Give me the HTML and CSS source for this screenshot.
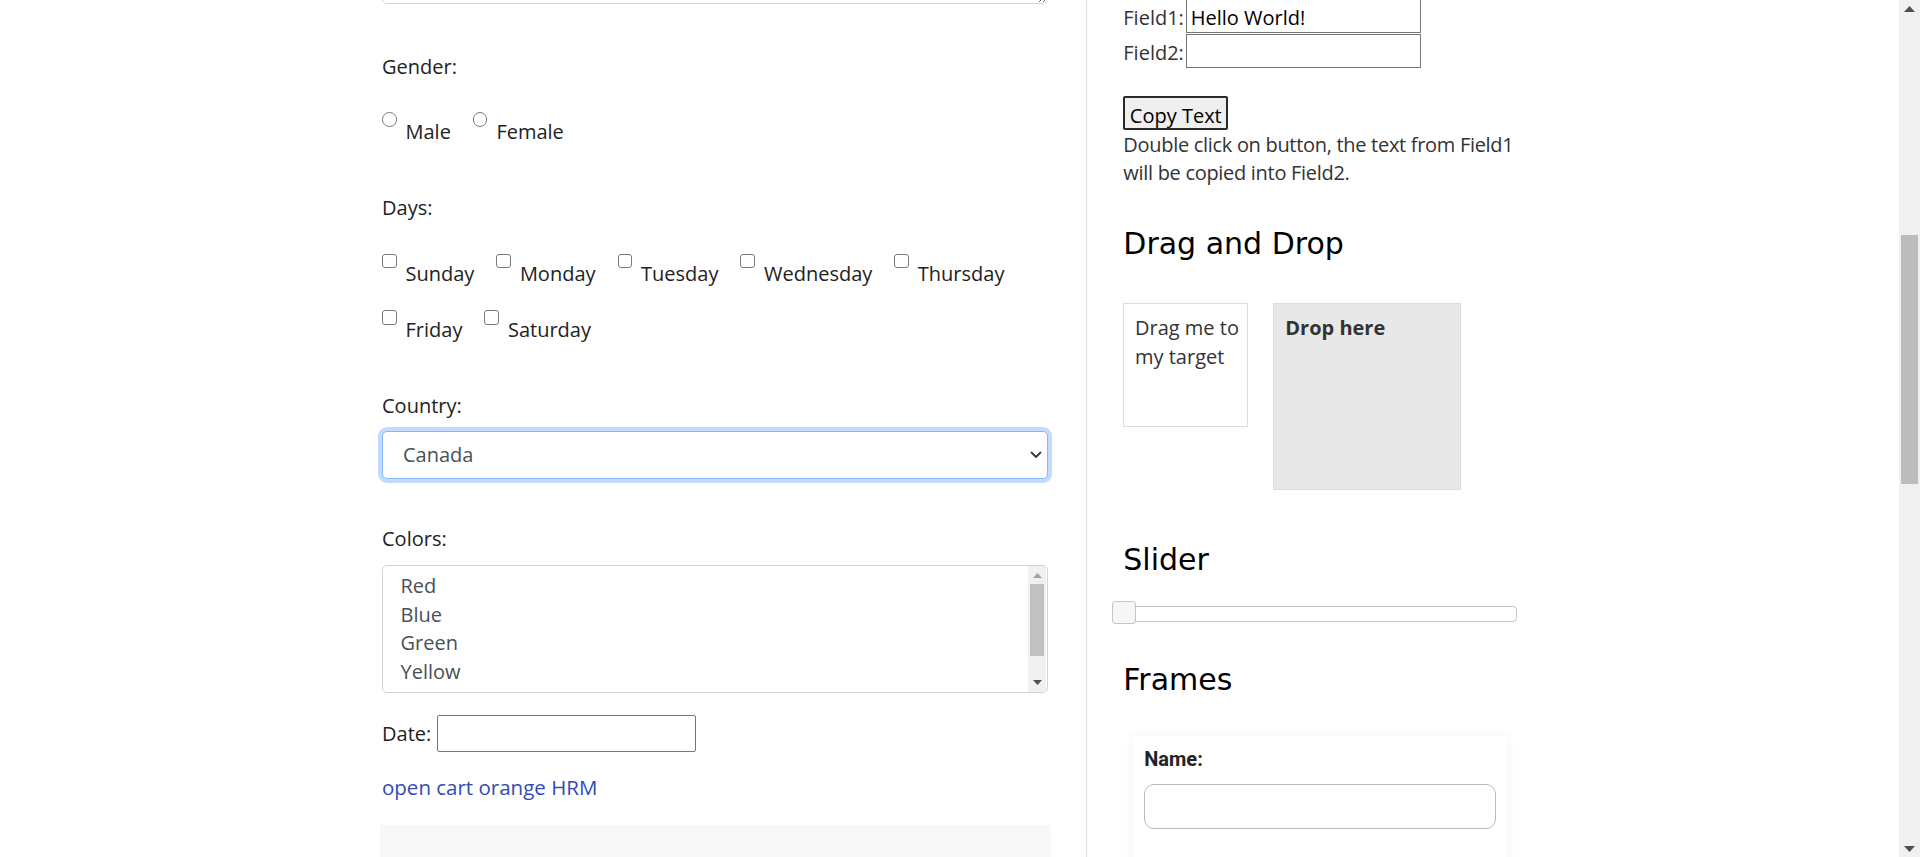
FILE: index.html
```html
<!DOCTYPE html>
<html lang="en">
<head>
<meta charset="utf-8">
<title>Automation Testing Practice</title>
<link rel="stylesheet" href="styles.css">
</head>
<body>
<div class="page">
  <div class="content">
    <main class="main">
      <textarea class="textarea" aria-label="Address"></textarea>

      <div class="field-label">Gender:</div>
      <div class="options options-gender">
        <label class="opt"><input type="radio" name="gender" class="ctl radio"><span>Male</span></label>
        <label class="opt"><input type="radio" name="gender" class="ctl radio"><span>Female</span></label>
      </div>

      <div class="field-label">Days:</div>
      <div class="options options-days">
        <label class="opt"><input type="checkbox" class="ctl checkbox"><span>Sunday</span></label>
        <label class="opt"><input type="checkbox" class="ctl checkbox"><span>Monday</span></label>
        <label class="opt"><input type="checkbox" class="ctl checkbox"><span>Tuesday</span></label>
        <label class="opt"><input type="checkbox" class="ctl checkbox"><span>Wednesday</span></label>
        <label class="opt"><input type="checkbox" class="ctl checkbox"><span>Thursday</span></label>
        <label class="opt"><input type="checkbox" class="ctl checkbox"><span>Friday</span></label>
        <label class="opt"><input type="checkbox" class="ctl checkbox"><span>Saturday</span></label>
      </div>

      <div class="field-label">Country:</div>
      <div class="select-wrap">
        <select class="form-select" aria-label="Country">
          <option>Canada</option>
        </select>
        <svg class="chevron" width="12" height="8" viewBox="0 0 12 8" aria-hidden="true"><path d="M1.5 1.5 L6 6 L10.5 1.5" fill="none" stroke="#343a40" stroke-width="1.8" stroke-linecap="round" stroke-linejoin="round"/></svg>
      </div>

      <div class="field-label field-label-colors">Colors:</div>
      <div class="listbox" role="listbox" aria-label="Colors">
        <div class="listbox-items">
          <div class="lb-opt" role="option">Red</div>
          <div class="lb-opt" role="option">Blue</div>
          <div class="lb-opt" role="option">Green</div>
          <div class="lb-opt" role="option">Yellow</div>
          <div class="lb-opt" role="option">White</div>
        </div>
        <div class="lb-scroll">
          <svg class="lb-arrow" width="9" height="5" viewBox="0 0 9 5"><path d="M0 5 L4.5 0 L9 5 Z" fill="#a3a3a3"/></svg>
          <div class="lb-thumb"></div>
          <div class="lb-fill"></div>
          <svg class="lb-arrow lb-arrow-down" width="9" height="5" viewBox="0 0 9 5"><path d="M0 0 L4.5 5 L9 0 Z" fill="#505050"/></svg>
        </div>
      </div>

      <div class="date-row">
        <label class="date-label" for="datepicker">Date:</label>
        <input id="datepicker" type="text" class="date-input">
      </div>

      <a class="link" href="#">open cart orange HRM</a>

      <div class="gray-box"></div>
    </main>

    <aside class="sidebar">
      <div class="fields">
        <div class="field-row"><label class="f-label">Field1:</label><input class="field-input" type="text" value="Hello World!"></div>
        <div class="field-row"><label class="f-label">Field2:</label><input class="field-input" type="text"></div>
      </div>
      <button class="btn" type="button">Copy Text</button>
      <p class="desc">Double click on button, the text from Field1 will be copied into Field2.</p>

      <h2 class="section-title title-dnd">Drag and Drop</h2>
      <div class="dnd">
        <div class="drag">Drag me to my target</div>
        <div class="drop">Drop here</div>
      </div>

      <h2 class="section-title title-slider">Slider</h2>
      <div class="slider"><span class="slider-handle"></span></div>

      <h2 class="section-title title-frames">Frames</h2>
      <div class="frame">
        <div class="frame-label">Name:</div>
        <input class="frame-input" type="text" aria-label="Name">
      </div>
    </aside>
  </div>

  <div class="vscroll" aria-hidden="true">
    <div class="sb-btn"><svg width="11" height="6" viewBox="0 0 11 6"><path d="M0 6 L5.5 0 L11 6 Z" fill="#505050"/></svg></div>
    <div class="sb-gap"></div>
    <div class="sb-thumb"></div>
    <div class="sb-fill"></div>
    <div class="sb-btn"><svg width="11" height="6" viewBox="0 0 11 6"><path d="M0 0 L5.5 6 L11 0 Z" fill="#505050"/></svg></div>
  </div>
</div>
</body>
</html>
```

FILE: styles.css
```css
* { box-sizing: border-box; }

html, body {
  margin: 0;
  height: 100%;
}

body {
  font-family: "Open Sans", "Noto Sans", sans-serif;
  font-size: 20px;
  line-height: 28.4px;
  color: #222;
  background: #fff;
  overflow: hidden;
}

.page {
  display: flex;
  height: 857px;
  overflow: hidden;
}

.content {
  flex: 1;
  display: flex;
  padding-left: 382px;
  overflow: hidden;
}

/* ---------- main column ---------- */
.main {
  width: 666px;
  flex: none;
}

.textarea {
  display: block;
  width: 100%;
  height: 104px;
  margin: -100px 0 0;
  border: 1px solid #ced4da;
  border-radius: 5px;
  font: inherit;
}

.field-label { margin-top: 47px; }
.textarea + .field-label { margin-top: 48.5px; }
.field-label-colors { margin-top: 46.5px; }

.options {
  display: flex;
  flex-wrap: wrap;
  column-gap: 22px;
  row-gap: 22px;
  margin-top: 31.5px;
}

.opt {
  display: flex;
  align-items: flex-start;
  gap: 9px;
}

.opt span { margin-top: 6px; }

.ctl {
  appearance: none;
  -webkit-appearance: none;
  flex: none;
  width: 14.5px;
  height: 14.5px;
  margin: 0;
  border: 1px solid #7a7a7a;
  background: #fff;
}

.radio { border-radius: 50%; }
.checkbox { border-radius: 3px; }

.select-wrap {
  position: relative;
  margin-top: 11px;
}

.form-select {
  appearance: none;
  -webkit-appearance: none;
  display: block;
  width: 100%;
  height: 48px;
  padding: 0 40px 0 20px;
  font: inherit;
  line-height: normal;
  color: #495057;
  background: #fff;
  border: 1px solid #86b7fe;
  border-radius: 5px;
  box-shadow: 0 0 0 4px rgba(13, 110, 253, 0.25);
  outline: none;
}

.chevron {
  position: absolute;
  right: 6px;
  top: 20px;
}

.listbox {
  display: flex;
  height: 128px;
  margin-top: 11px;
  border: 1px solid #ced4da;
  border-radius: 5px;
  overflow: hidden;
  color: #495057;
}

.listbox-items {
  flex: 1;
  padding: 6.5px 15px 0;
  overflow: hidden;
}

.lb-opt {
  padding: 0 2.5px;
  line-height: 28.4px;
}

.lb-scroll {
  flex: none;
  width: 18px;
  margin: 0 1px 0 0;
  background: #f0f0f0;
  display: flex;
  flex-direction: column;
  align-items: center;
}

.lb-arrow { margin-top: 7px; flex: none; }
.lb-arrow-down { margin: 0 0 7px; }

.lb-thumb {
  flex: none;
  width: 14px;
  height: 72.5px;
  margin-top: 6px;
  background: #c1c1c1;
}

.lb-fill { flex: 1; }

.date-row {
  display: flex;
  align-items: baseline;
  gap: 6px;
  margin-top: 22px;
}

.date-input {
  width: 259px;
  height: 37px;
  padding: 0 4px;
  border: 1px solid #767676;
  border-radius: 2px;
  font: inherit;
  line-height: normal;
}

.link {
  display: block;
  width: max-content;
  margin-top: 21.5px;
  font-size: 20.5px;
  color: #2f4db5;
  text-decoration: none;
}

.gray-box {
  height: 140px;
  margin: 23px -2.5px 0;
  background: #f8f8f8;
}

/* ---------- sidebar ---------- */
.sidebar {
  flex: none;
  width: 431px;
  margin-left: 38px;
  padding-left: 36.3px;
  border-left: 1px solid #dddddd;
  color: #333;
}

.fields {
  display: flex;
  flex-direction: column;
  gap: 1px;
  margin-top: -1px;
}

.field-row {
  display: flex;
  align-items: baseline;
  gap: 6px;
}

.f-label {
  width: 56.5px;
  white-space: nowrap;
}

.field-input {
  width: 235px;
  height: 34px;
  padding: 2px 3px 0 4px;
  border: 1px solid #767676;
  border-radius: 0;
  font: inherit;
  line-height: normal;
  color: #000;
  background: #fff;
}

.btn {
  display: block;
  width: 105px;
  height: 34px;
  margin-top: 28px;
  padding: 4px 0 0;
  border: 2px solid #2a2a2a;
  border-radius: 2px;
  background: #efefef;
  font: inherit;
  line-height: normal;
  color: #000;
}

.desc {
  margin: 1px 0 0;
  letter-spacing: -0.3px;
}

.section-title {
  margin: 0;
  font-family: "DejaVu Sans", Verdana, sans-serif;
  font-size: 30px;
  font-weight: normal;
  line-height: 35px;
  color: #000;
}

.title-dnd { margin-top: 38px; }
.title-slider { margin-top: 52.5px; }
.title-frames { margin-top: 40.4px; }

.dnd {
  display: flex;
  align-items: flex-start;
  gap: 25.6px;
  margin-top: 42.5px;
}

.drag {
  width: 124.4px;
  height: 124px;
  padding: 10px 3px 10px 10.7px;
  border: 1px solid #dddddd;
}

.drop {
  width: 187.7px;
  height: 186.4px;
  padding: 10px 11px;
  border: 1px solid #dddddd;
  background: #e8e8e8;
  font-weight: bold;
}

.slider {
  position: relative;
  width: 393.5px;
  height: 15.5px;
  margin-top: 29px;
  border: 1px solid #c5c5c5;
  border-radius: 4px;
  background: #fff;
}

.slider-handle {
  position: absolute;
  left: -12px;
  top: -6px;
  width: 23.4px;
  height: 23px;
  border: 1px solid #c5c5c5;
  border-radius: 3px;
  background: #f6f6f6;
}

.frame {
  height: 200px;
  margin: 38.6px 10px 0 9.4px;
  padding: 11.5px 11.5px 12px;
  background: #fff;
  box-shadow: 0 0 10px rgba(0, 0, 0, 0.06);
}

.frame-label {
  font-family: Roboto, "Liberation Sans", sans-serif;
  font-weight: 700;
  font-size: 20px;
  line-height: normal;
  color: #222;
}

.frame-input {
  display: block;
  width: 100%;
  height: 45px;
  margin-top: 12.7px;
  border: 1px solid #bbbbbb;
  border-radius: 10px;
  font: inherit;
}

/* ---------- page scrollbar ---------- */
.vscroll {
  flex: none;
  width: 21px;
  background: #f0f0f0;
  display: flex;
  flex-direction: column;
  align-items: center;
}

.sb-btn {
  flex: none;
  height: 17px;
  display: flex;
  align-items: center;
  justify-content: center;
}

.sb-gap { flex: none; height: 218px; }

.sb-thumb {
  flex: none;
  width: 17px;
  height: 249px;
  background: #bcbcbc;
}

.sb-fill { flex: 1; }
```
